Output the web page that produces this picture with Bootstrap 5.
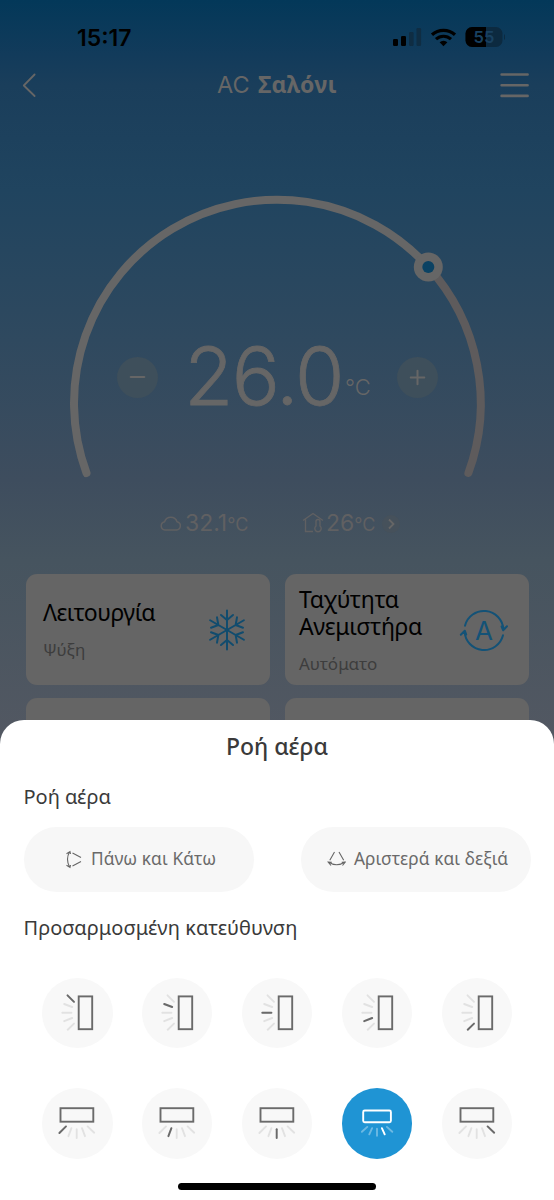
<!DOCTYPE html>
<html lang="el">
<head>
<meta charset="utf-8">
<meta name="viewport" content="width=device-width, initial-scale=1">
<title>AC Σαλόνι</title>
<link href="https://cdn.jsdelivr.net/npm/bootstrap@5.3.0/dist/css/bootstrap.min.css" rel="stylesheet">
<style>
body{font-family:"Noto Sans",sans-serif;color:#3a3a3a;background:#fff;line-height:1}
svg{display:block;flex:none}
.latin{font-family:Inter,sans-serif}
.screen{height:1200px;overflow:hidden}
.room{height:750px;background:linear-gradient(#033859 0,#123b5b 55px,#1a3e5b 85px,#20445f 190px,#2f495f 340px,#3e4d5e 480px,#46545f 560px,#535862 750px);color:#666}
.statusbar{height:60px;padding:16px 49px 0 77px;color:#000}
.clock{font-size:23px;font-weight:600;line-height:44px}
.topbar{height:50px;padding:0 25px 0 22px}
.screen-title{font-size:23px;letter-spacing:.25px;padding-left:4px}
.screen-title .latin{font-size:23.500px;letter-spacing:0;margin-right:2px}
.dial{display:grid;height:390px}
.dial>*{grid-area:1/1}
.readout{margin-top:235px;height:64px;padding:0 116px 0 117px}
.step{width:41px;height:41px;border-radius:50%;background:#3e4f5b}
.temp{font-size:80px;font-weight:300;letter-spacing:-1.400px;padding-bottom:3px;-webkit-text-stroke:.8px #666}
.unit{font-size:22px;font-weight:300;padding-bottom:21px;margin-left:2px}
.ambient{height:46px;padding-left:159px;color:#606062;font-size:23px}
.ambient small{font-size:18px}
.reading{width:65px;margin-left:2px}
.house{margin-left:52px}
.more{margin-left:6px}
.tiles{padding:28px 25px 0 26px;display:grid;grid-template-columns:244px 244px;gap:13px 14.500px}
.tile{height:111px;border:0;border-radius:11px;background:#656565;color:#000;padding:0 20px 0 17px}
.tile:nth-child(2){padding-left:14.500px}
.tile-name{font-size:23px;line-height:27px;letter-spacing:-.5px}
.tile:nth-child(2) .tile-name{letter-spacing:-.35px}
.tile-sub{font-size:17px;color:#3d3d3d;line-height:20px;margin-top:14px}
.sheet{height:480px;margin-top:-30px;border-radius:24px 24px 0 0;background:#fff}
.sheet-title{font-size:23px;font-weight:500;line-height:28px;padding-top:12px}
.sub{font-size:20px;font-weight:400;line-height:24px;padding-left:23.500px;margin:25px 0 18px}
.sub.custom{margin:23.500px 0 38px;letter-spacing:.05px}
.modes{padding:0 23px 0 24px}
.mode{width:230px;height:65px;border-radius:33px;background:#f7f7f7;color:#6a6a6a;font-size:17.300px;letter-spacing:.1px;border:0;padding:0 0 1px 3px}
.dirs{padding:0 42px}
.dirs+.dirs{margin-top:40px}
.dir{width:70.500px;height:70.500px;border-radius:50%;background:#f8f8f8;border:0;padding:0}
.dir.on{background:#1f94d4}
.dir svg{width:70px;height:70px;fill:none;stroke:#6a6a6a;stroke-width:1.900;stroke-linecap:round}
.dir.on svg{stroke:#fff}
.faint{stroke:#e2e2e2}
.home{width:198px;height:6.500px;border-radius:4px;background:#000;margin-top:24.500px}
</style>
</head>
<body>
<svg width="0" height="0" class="position-absolute">
<symbol id="side" viewBox="0 0 70 70"><rect x="36.700" y="18.400" width="13.500" height="32.800"/><path class="faint" d="M25.500 17.300L32 23.800M22.200 26L30.200 29M20.300 34.700H29.400M22.200 43.200L30.200 40M25.700 51.700L32 45.600"/></symbol>
<symbol id="down" viewBox="0 0 70 70"><rect x="18.500" y="20.200" width="32.800" height="13.500"/><path class="faint" d="M17.400 45L24 38.400M26.400 48.200L29.400 40.200M34.700 41.200V50M40 40.200L43 48.200M45.600 38.400L52.200 44.700"/></symbol>
</svg>
<div class="screen">
<main class="room overflow-hidden">
  <div class="statusbar d-flex justify-content-between">
    <span class="clock latin">15:17</span>
    <svg width="114" height="42" viewBox="0 0 114 42">
      <rect x="2" y="23" width="5" height="7" rx="1.200"/><rect x="10" y="20" width="5" height="10" rx="1.200"/><g fill="#0f2d43"><rect x="18" y="16" width="4.600" height="14" rx="1.200"/><rect x="25.500" y="12" width="4.600" height="18" rx="1.200"/></g>
      <g fill="none" stroke="#000" stroke-width="3.200"><path d="M41 18.800A17 17 0 0 1 64 18.800"/><path d="M45 23.200A11 11 0 0 1 60 23.200"/></g><path d="M48.600 26.300A5.800 5.800 0 0 1 56.400 26.300L52.500 30.200z"/>
      <rect x="74.500" y="11" width="37" height="20" rx="6.500" fill="#0c2a40"/><path d="M81 11H95V31H81A6.500 6.500 0 0 1 74.500 24.500V17.500A6.500 6.500 0 0 1 81 11z"/><path d="M113 18Q116 21 113 24z" fill="#0c2a40"/>
      <text class="latin" x="82.500" y="27" font-size="16.500" font-weight="600" fill="#194160">55</text>
    </svg>
  </div>
  <header class="topbar d-flex align-items-center justify-content-between">
    <svg width="28" height="26" viewBox="0 0 28 26" fill="none" stroke="#666" stroke-width="1.800" stroke-linecap="round" stroke-linejoin="round"><path d="M12.600 2.500L1.800 13.500L12.600 24"/></svg>
    <div class="screen-title"><span class="latin">AC</span> <b>Σαλόνι</b></div>
    <svg width="29" height="26" viewBox="0 0 29 26" stroke="#666" stroke-width="2.600" stroke-linecap="round"><path d="M1.600 2.500H27.600M1.600 13.300H27.600M1.600 23.900H27.600"/></svg>
  </header>
  <section class="dial">
    <svg width="554" height="390" viewBox="0 110 554 390" fill="none">
      <path d="M428.300 267A203.200 203.200 0 0 1 468.400 473" stroke="#5e5b5c" stroke-width="8" stroke-linecap="round"/>
      <path d="M86.500 473A203.200 203.200 0 0 1 428.300 267" stroke="#666" stroke-width="8" stroke-linecap="round"/>
      <circle cx="428.300" cy="267" r="14.500" fill="#666"/><circle cx="428.300" cy="267" r="6" fill="#0b4263"/>
    </svg>
    <div class="readout d-flex align-items-center justify-content-between">
      <span class="step"><svg width="41" height="41" stroke="#666" stroke-width="2" stroke-linecap="round"><path d="M13.700 20H27.300"/></svg></span>
      <span class="d-flex align-items-end latin"><span class="temp">26.0</span><span class="unit">°C</span></span>
      <span class="step"><svg width="41" height="41" stroke="#666" stroke-width="2" stroke-linecap="round"><path d="M13.700 20.500H27.300M20.500 13.700V27.300"/></svg></span>
    </div>
  </section>
  <section class="ambient d-flex align-items-center latin">
    <svg width="24" height="20" viewBox="0 0 24 20" fill="none" stroke="#606062" stroke-width="1.500"><path d="M6 17H17.500A4.200 4.200 0 0 0 18 8.700A6.500 6.500 0 0 0 5.600 8.700A4.200 4.200 0 0 0 6 17z"/></svg>
    <span class="reading">32.1<small>°C</small></span>
    <svg class="house" width="24" height="22" viewBox="0 0 24 22" fill="none" stroke="#606062" stroke-width="1.400"><path d="M1 8.500L11 1.500L21 8.500M3.500 7.500V19.500H11"/><path d="M14 14V9.500A1.900 1.900 0 0 1 18 9.500V14A3.200 3.200 0 1 1 14 14z"/></svg>
    <span>26<small>°C</small></span>
    <svg class="more" width="20" height="20" viewBox="0 0 20 20" fill="none"><circle cx="10" cy="11" r="9" fill="#46515b"/><path d="M8 6.500L12.500 11L8 15.500" stroke="#666" stroke-width="1.800"/></svg>
  </section>
  <section class="tiles">
    <div class="tile card flex-row align-items-center justify-content-between">
      <div><div class="tile-name">Λειτουργία</div><div class="tile-sub">Ψύξη</div></div>
      <svg width="46" height="46" viewBox="-23 -23 46 46" fill="none" stroke="#114c6e" stroke-width="2" stroke-linecap="round" stroke-linejoin="round"><g id="arm"><path d="M0 0V-19.500M-6 -15L0 -10L6 -15"/></g><use href="#arm" transform="rotate(60)"/><use href="#arm" transform="rotate(120)"/><use href="#arm" transform="rotate(180)"/><use href="#arm" transform="rotate(240)"/><use href="#arm" transform="rotate(300)"/></svg>
    </div>
    <div class="tile card flex-row align-items-center justify-content-between">
      <div><div class="tile-name">Ταχύτητα</div><div class="tile-name">Ανεμιστήρα</div><div class="tile-sub">Αυτόματο</div></div>
      <svg width="50" height="46" viewBox="-25 -23 50 46" fill="none" stroke="#135277" stroke-width="2" stroke-linecap="round" stroke-linejoin="round"><path d="M-19 -4.300A19.500 19.500 0 0 1 19.400 -.500M17.600 -3.500L19.200 .300L23 -3.700M19 5.300A19.500 19.500 0 0 1 -19.400 1.500M-17.800 4.500L-19.200 .700L-23.200 4.700"/><text class="latin" y="10" text-anchor="middle" font-size="26" font-weight="400" fill="#135277" stroke="none">A</text></svg>
    </div>
    <div class="tile card"></div><div class="tile card"></div>
  </section>
</main>
<section class="sheet position-relative">
  <h1 class="sheet-title text-center m-0">Ροή αέρα</h1>
  <h2 class="sub">Ροή αέρα</h2>
  <div class="modes d-flex justify-content-between">
    <button class="mode d-flex align-items-center justify-content-center gap-2"><svg width="18" height="20" viewBox="0 0 18 20" fill="none" stroke="#666" stroke-width="1.100"><path d="M7.500 4L16 8.500M7.500 17L16 12.500M4.500 3Q.500 10 4.500 18M1.500 4.800L5 2.600L5.500 5M1.500 16.200L5 18.400L5.500 16"/></svg>Πάνω και Κάτω</button>
    <button class="mode d-flex align-items-center justify-content-center gap-2"><svg width="19" height="18" viewBox="0 0 19 18" fill="none" stroke="#666" stroke-width="1.100"><path d="M7.500 2L2.800 10.200M12 2L16.700 10.200M1.500 12Q9.500 17.500 18 12M4 15.500L1.200 12L4.800 12.200M15.500 15.500L18.300 12L14.700 12.200"/></svg>Αριστερά και δεξιά</button>
  </div>
  <h2 class="sub custom">Προσαρμοσμένη κατεύθυνση</h2>
  <div class="dirs d-flex justify-content-between">
    <button class="dir"><svg><use href="#side"/><path d="M25.500 17.300L32 23.800"/></svg></button>
    <button class="dir"><svg><use href="#side"/><path d="M22.200 26L30.200 29"/></svg></button>
    <button class="dir"><svg><use href="#side"/><path d="M20.300 34.700H29.400"/></svg></button>
    <button class="dir"><svg><use href="#side"/><path d="M22.200 43.200L30.200 40"/></svg></button>
    <button class="dir"><svg><use href="#side"/><path d="M25.700 51.700L32 45.600"/></svg></button>
  </div>
  <div class="dirs d-flex justify-content-between">
    <button class="dir"><svg><use href="#down"/><path d="M17.400 45L24 38.400"/></svg></button>
    <button class="dir"><svg><use href="#down"/><path d="M26.400 48.200L29.400 40.200"/></svg></button>
    <button class="dir"><svg><use href="#down"/><path d="M34.700 41.200V50"/></svg></button>
    <button class="dir on"><svg><rect x="21.200" y="22.500" width="27.700" height="11.700" rx="1.500"/><path opacity=".35" d="M19.900 43.800L25.300 38.900M27.300 46.300L30.100 40.200M35 40.800V47.700M44.900 38.900L50.300 43.800"/><path d="M39.900 40.200L42.700 46.300"/></svg></button>
    <button class="dir"><svg><use href="#down"/><path d="M45.600 38.400L52.200 44.700"/></svg></button>
  </div>
  <div class="home mx-auto"></div>
</section>
</div>
<script src="https://cdn.jsdelivr.net/npm/bootstrap@5.3.0/dist/js/bootstrap.bundle.min.js"></script>
</body>
</html>
